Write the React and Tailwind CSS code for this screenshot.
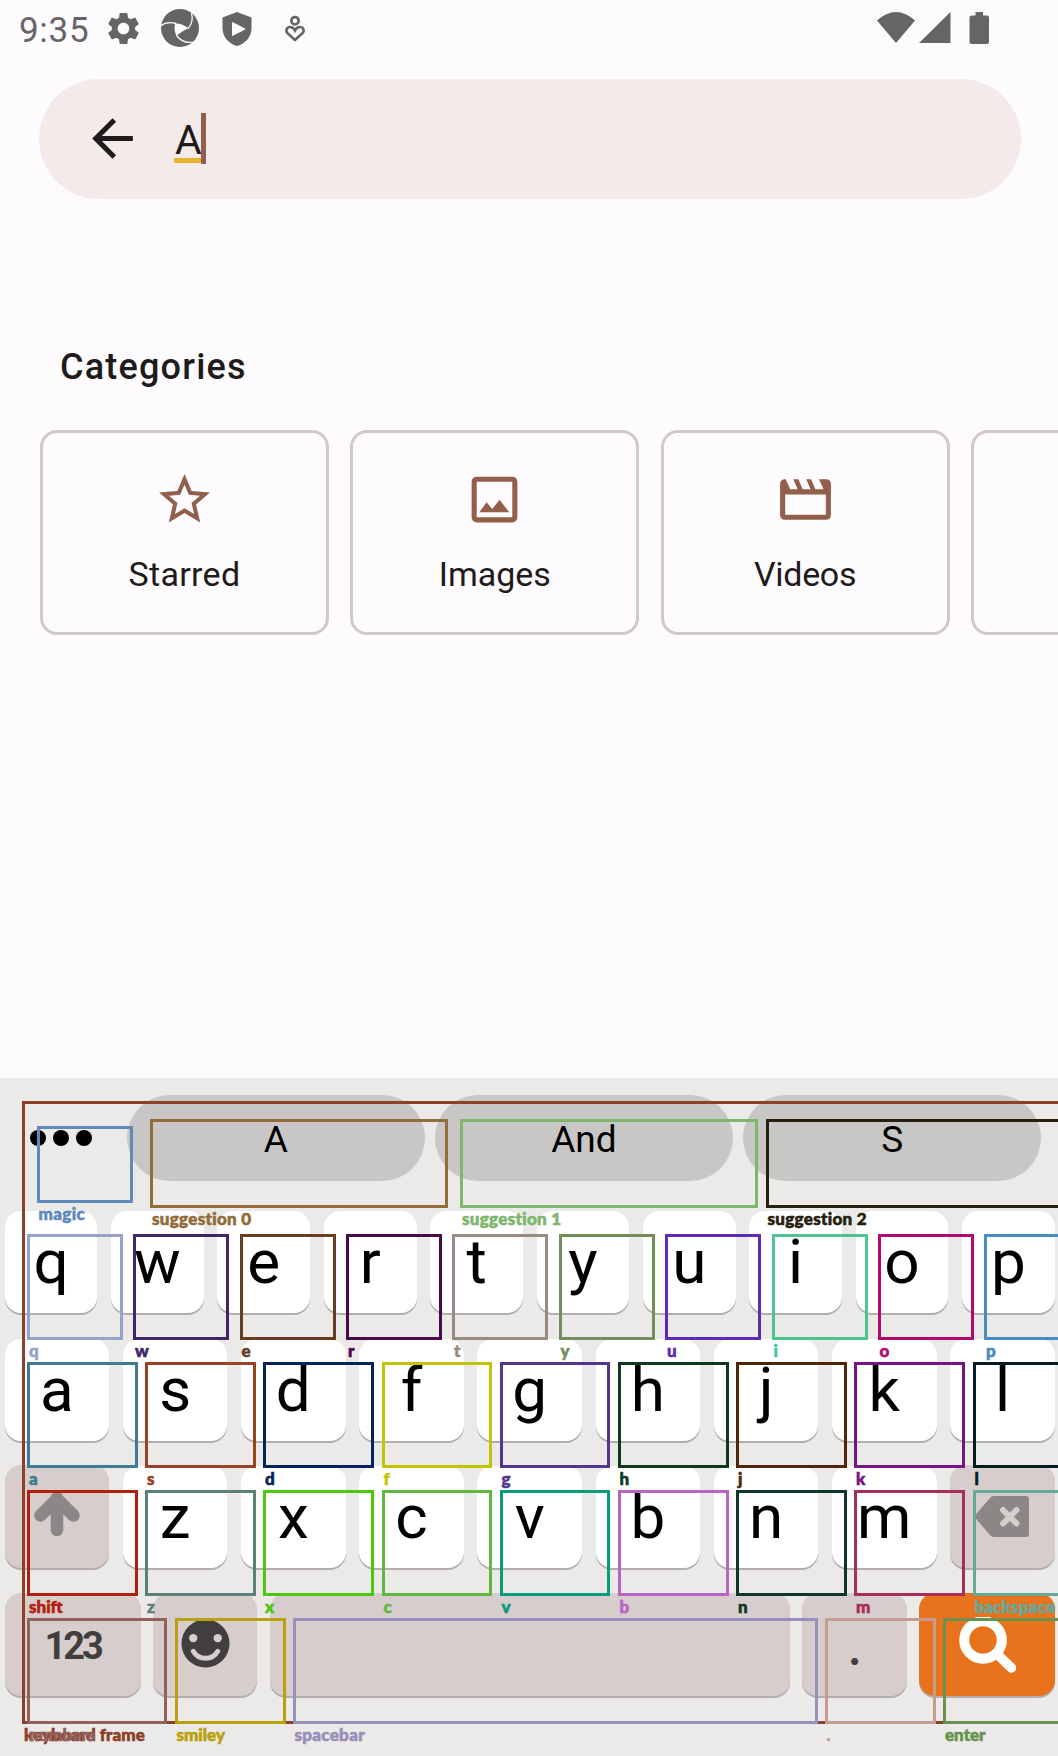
import React from "react";

const row1 = "qwertyuiop".split("");
const row2 = "asdfghjkl".split("");
const row3 = "zxcvbnm".split("");

// Accessibility bounds drawn over the keyboard: [label, left, top, width, height, color, letter spacing]
const frames = [
  ["keyboard frame", 22, 1101, 1100, 623, "#8b4029", 0.1],
  ["magic", 36.5, 1125.5, 96, 77, "#5f8aba", 0.4],
  ["suggestion 0", 150, 1119, 298, 89, "#936c3b", 0.3],
  ["suggestion 1", 460, 1119, 298, 89, "#7fb66e", 0.3],
  ["suggestion 2", 765.5, 1119, 320, 89, "#26200f", 0.3],
  ["q", 27, 1234, 96, 106, "#95a2ca", 0],
  ["w", 133, 1234, 96, 106, "#412568", 0],
  ["e", 239.5, 1234, 96, 106, "#673e1f", 0],
  ["r", 346, 1234, 96, 106, "#4b084b", 0],
  ["t", 452, 1234, 96, 106, "#9b8a84", 0],
  ["y", 558.5, 1234, 96, 106, "#738e5b", 0],
  ["u", 665, 1234, 96, 106, "#5e2bb9", 0],
  ["i", 771.5, 1234, 96, 106, "#4dc490", 0],
  ["o", 877.5, 1234, 96, 106, "#b1096f", 0],
  ["p", 984, 1234, 96, 106, "#478cc2", 0],
  ["a", 27, 1362, 110.5, 106, "#3f7b92", 0],
  ["s", 145, 1362, 111, 106, "#994326", 0],
  ["d", 263, 1362, 111, 106, "#03255d", 0],
  ["f", 381.5, 1362, 110.5, 106, "#c1c506", 0],
  ["g", 499.5, 1362, 110.5, 106, "#55368d", 0],
  ["h", 617.5, 1362, 111, 106, "#0d3a1d", 0],
  ["j", 736, 1362, 111, 106, "#4f260a", 0],
  ["k", 854, 1362, 111, 106, "#771386", 0],
  ["l", 972.5, 1362, 111, 106, "#041c20", 0],
  ["shift", 27, 1490, 110.5, 106, "#b21f0d", 0],
  ["z", 145, 1490, 111, 106, "#5c7f79", 0],
  ["x", 263, 1490, 111, 106, "#48c80f", 0],
  ["c", 381.5, 1490, 110.5, 106, "#60b840", 0],
  ["v", 499.5, 1490, 110.5, 106, "#089b7c", 0],
  ["b", 617.5, 1490, 111, 106, "#b963c8", 0],
  ["n", 736, 1490, 111, 106, "#0e3729", 0],
  ["m", 854, 1490, 111, 106, "#a82e59", 0],
  ["backspace", 972.5, 1490, 111, 106, "#66a89a", 0.2],
  ["numbers", 27, 1618, 140, 106, "#94605c", 0],
  ["smiley", 174.5, 1618, 111, 106, "#baa00c", 0],
  ["spacebar", 292.5, 1618, 525, 106, "#988fba", 0.3],
  [".", 824.5, 1618, 111, 106, "#c49d90", 0],
  ["enter", 943, 1618, 150, 106, "#68924f", 0],
];

function Frame({ data: [label, left, top, width, height, color, spacing] }) {
  return (
    <div className="absolute border-3" style={{ left, top, width, height, borderColor: color }}>
      <span
        className="absolute left-[-1px] top-full mt-[3px] font-['Lato'] text-[17px] leading-[22px] font-black whitespace-nowrap [-webkit-text-stroke:0.6px]"
        style={{ color, letterSpacing: spacing }}
      >
        {label}
      </span>
    </div>
  );
}

function Key({ children, className = "" }) {
  return (
    <div
      className={
        "h-[102px] shrink-0 rounded-[16px] text-center text-[62px] leading-[101px] text-black shadow-[0_2px_0_#b1aead] " +
        className
      }
    >
      {children}
    </div>
  );
}

function Pill({ children }) {
  return (
    <div className="h-[86px] w-[297.500px] shrink-0 rounded-full bg-[#c9c7c6] text-center text-[37px] leading-[89px] text-black">
      {children}
    </div>
  );
}

function Card({ label, className = "", children }) {
  return (
    <div className="flex h-[205px] w-[289px] shrink-0 flex-col items-center rounded-[17px] border-3 border-[#d1c9c8] pt-[36px]">
      {children}
      <span className={"mt-[20px] text-[34px] leading-[48px] text-[#1f1b1a] " + className}>{label}</span>
    </div>
  );
}

export default function App() {
  return (
    <div className="relative flex h-[1756px] w-[1058px] flex-col overflow-hidden bg-[#fefbff] font-['Roboto',sans-serif]">
      {/* Status bar */}
      <div className="flex h-[56px] shrink-0 items-center pl-[19px] pr-[68px] text-[#676468]">
        <span className="mt-[5px] w-[85px] text-[35px] leading-[60px] tracking-[0.7px]">9:35</span>
        <svg className="mt-[1px] size-[39px]" viewBox="0 0 24 24" fill="currentColor">
          <path d="M19.14 12.94c.04-.3.06-.61.06-.94 0-.32-.02-.64-.07-.94l2.03-1.58c.18-.14.23-.41.12-.61l-1.92-3.32c-.12-.22-.37-.29-.59-.22l-2.39.96c-.5-.38-1.03-.7-1.62-.94l-.36-2.54c-.04-.24-.24-.41-.48-.41h-3.84c-.24 0-.43.17-.47.41l-.36 2.54c-.59.24-1.13.57-1.62.94l-2.39-.96c-.22-.08-.47 0-.59.22L2.74 8.87c-.12.21-.08.47.12.61l2.03 1.58c-.05.3-.09.63-.09.94s.02.64.07.94l-2.03 1.58c-.18.14-.23.41-.12.61l1.92 3.32c.12.22.37.29.59.22l2.39-.96c.5.38 1.03.7 1.62.94l.36 2.54c.05.24.24.41.48.41h3.84c.24 0 .44-.17.47-.41l.36-2.54c.59-.24 1.13-.56 1.62-.94l2.39.96c.22.08.47 0 .59-.22l1.92-3.32c.12-.22.07-.47-.12-.61l-2.01-1.58zM12 15.6c-1.98 0-3.6-1.62-3.6-3.6s1.62-3.6 3.6-3.6 3.6 1.62 3.6 3.6-1.62 3.6-3.6 3.6z" />
        </svg>
        <svg className="ml-[17px] h-[40px] w-[40px]" viewBox="0 0 40 40">
          <circle cx="20" cy="20" r="19" fill="currentColor" />
          <path d="M15 15.500 Q22 15 28.500 20.500 Q23 22 16.500 28 Q13.500 22 15 15.500 Z" fill="#fefbff" />
          <g fill="none" stroke="#fefbff" strokeWidth="1.300">
            <path d="M0.500 18 Q7 13 16 15.500" />
            <path d="M31.500 5 Q34 14 28 20.500" />
            <path d="M16.500 27.500 Q24 37 35 33.500" />
          </g>
        </svg>
        <svg className="ml-[22px] mt-[2px] h-[34px] w-[30px]" viewBox="0 0 30 34">
          <path d="M15 0 L29.500 5.500 V16 C29.500 25 23.500 31.500 15 34 C6.500 31.500 .5 25 .5 16 V5.500 Z" fill="currentColor" />
          <path d="M10.500 10.500 L23 17 L10.500 23.500 Z" fill="#fefbff" stroke="#fefbff" strokeWidth="1" strokeLinejoin="round" />
        </svg>
        <svg className="ml-[31.500px] mt-[1px] h-[30px] w-[22px]" viewBox="0 0 22 30" fill="none" stroke="currentColor" strokeWidth="2.600">
          <circle cx="11" cy="6.800" r="3.700" />
          <path d="M11 26 L3.500 19.200 C1 16.500 3 13 6 13 C8.500 13 10 14.500 11 16.500 C12 14.500 13.500 13 16 13 C19 13 21 16.500 18.500 19.200 Z" />
        </svg>
        <svg className="ml-auto h-[32px] w-[113px]" viewBox="0 0 113 32" fill="currentColor">
          <path d="M0 8.500 Q19 -8.500 38 8.500 L19 31 Z" />
          <path d="M73.500 0 V31 H42 Z" />
          <path d="M98.500 0 H106 V3.500 H110 Q112 3.500 112 5.500 V30 Q112 32 110 32 H94.500 Q92.500 32 92.500 30 V5.500 Q92.500 3.500 94.500 3.500 H98.500 Z" />
        </svg>
      </div>

      {/* Search field */}
      <div className="mx-[39px] mr-[37px] mt-[22.500px] flex h-[120px] shrink-0 items-center rounded-full bg-[#f3eae9] pl-[43px]">
        <svg className="size-[61px]" viewBox="0 0 24 24" fill="#1f1b1a">
          <path d="M20 11H7.830l5.590-5.590L12 4l-8 8 8 8 1.410-1.410L7.830 13H20v-2z" />
        </svg>
        <div className="ml-[31px] h-[48px] w-[28px] border-b-[5px] border-[#e4b42e] pl-px text-[41px] leading-[50px] text-[#1f1b1a]">
          A
        </div>
        <div className="ml-[-1px] h-[51px] w-[5px] bg-[#925f4b]" />
      </div>

      <h2 className="ml-[60px] mt-[143.500px] shrink-0 text-[36px] leading-[50px] font-medium tracking-[1.200px] text-[#1f1b1a]">
        Categories
      </h2>
      <div className="ml-[40px] mt-[38px] flex shrink-0 gap-[21.300px]">
        <Card label="Starred" className="tracking-[0.300px]">
          <svg className="size-[61px]" viewBox="0 0 24 24" fill="#925f4b">
            <path d="M22 9.240l-7.190-.620L12 2 9.190 8.630 2 9.240l5.460 4.730L5.820 21 12 17.270 18.180 21l-1.630-7.030L22 9.240zM12 15.400l-3.760 2.270 1-4.280-3.320-2.880 4.380-.380L12 6.100l1.710 4.040 4.380.380-3.320 2.880 1 4.280L12 15.400z" />
          </svg>
        </Card>
        <Card label="Images">
          <svg className="size-[61px]" viewBox="0 0 24 24">
            <rect x="4" y="4" width="16" height="16" rx="1" fill="none" stroke="#925f4b" strokeWidth="2" />
            <path d="M6 17 L8.900 13.100 L11.100 15.700 L14 12.100 L17.800 17 Z" fill="#925f4b" />
          </svg>
        </Card>
        <Card label="Videos" className="tracking-[-0.300px]">
          <svg className="size-[61px]" viewBox="0 0 24 24">
            <path
              fillRule="evenodd"
              fill="#925f4b"
              d="M4 4 L4.200 4 L6 8 H8.900 L7.200 4 H9.200 L10.900 8 H14 L12.300 4 H14.200 L15.900 8 H19.100 L17.300 4 H20 Q22 4 22 6 V18 Q22 20 20 20 H4 Q2 20 2 18 V6 Q2 4 4 4 Z M4 10 V18 H20 V10 Z"
            />
          </svg>
        </Card>
        <Card />
      </div>

      {/* Keyboard */}
      <div className="mt-auto h-[678px] shrink-0 bg-[#ebeae8]">
        <div className="flex h-[133px] pt-[17px]">
          <div className="flex w-[127px] shrink-0 gap-[7.500px] pl-[30px] pt-[35px]">
            <div className="size-[15.500px] rounded-full bg-black" />
            <div className="size-[15.500px] rounded-full bg-black" />
            <div className="size-[15.500px] rounded-full bg-black" />
          </div>
          <div className="flex gap-[10.700px]">
            <Pill>A</Pill>
            <Pill>And</Pill>
            <Pill>S</Pill>
          </div>
        </div>
        <div className="flex h-[127.700px] gap-[13.700px] pl-[4.700px]">
          {row1.map((k) => (
            <Key key={k} className="w-[92.700px] bg-white">{k}</Key>
          ))}
        </div>
        <div className="flex h-[127.700px] gap-[13.700px] pl-[4.700px]">
          {row2.map((k) => (
            <Key key={k} className="w-[104.500px] bg-white">{k}</Key>
          ))}
        </div>
        <div className="flex h-[126.300px] gap-[13.700px] pl-[4.700px]">
          <Key className="-mt-[1px] h-[103px] w-[104.500px] bg-[#d6cdcc]">
            <svg className="mx-auto mt-[25px] h-[48px] w-[48px]" viewBox="0 0 48 48" fill="none" stroke="#8b8786" strokeWidth="12.500" strokeLinecap="round" strokeLinejoin="round">
              <path d="M24 8 V40 M7.500 25.500 L24 9 L40.500 25.500" />
            </svg>
          </Key>
          {row3.map((k) => (
            <Key key={k} className="w-[104.500px] bg-white">{k}</Key>
          ))}
          <Key className="-mt-[1px] h-[103px] w-[105px] bg-[#d6cdcc]">
            <svg className="ml-[23.500px] mt-[31px] h-[41px] w-[56px]" viewBox="0 0 56 41">
              <path d="M0 20.500 L16 2 Q17.500 0 20 0 H52 Q55 0 55 3 V38 Q55 41 52 41 H20 Q17.500 41 16 39 Z" fill="#8b8786" />
              <path d="M29 14 L42.500 27.500 M42.500 14 L29 27.500" stroke="#d6cdcc" strokeWidth="6" strokeLinecap="round" />
            </svg>
          </Key>
        </div>
        <div className="flex gap-[12.400px] pl-[4.600px]">
          <Key className="h-[103px] w-[136px] bg-[#d6cdcc]">
            <span className="block text-[38px] leading-[107px] font-bold tracking-[-3px] text-[#403e3e]">123</span>
          </Key>
          <Key className="h-[103px] w-[104.500px] bg-[#d6cdcc]">
            <svg className="ml-[28.500px] mt-[26px] h-[49px] w-[49px]" viewBox="0 0 50 50">
              <circle cx="25" cy="25" r="24.500" fill="#403e3e" />
              <circle cx="12.500" cy="19.500" r="4.300" fill="#d6cdcc" />
              <circle cx="37.500" cy="19.500" r="4.300" fill="#d6cdcc" />
              <path d="M12.500 33 C18 42.500 32 42.500 37.500 33" fill="none" stroke="#d6cdcc" strokeWidth="5" strokeLinecap="round" />
            </svg>
          </Key>
          <Key className="h-[103px] w-[520px] bg-[#d6cdcc]" />
          <Key className="h-[103px] w-[104.500px] bg-[#d6cdcc]">
            <span className="block font-['Lato'] text-[43px] leading-[112px] font-black text-[#403e3e]">.</span>
          </Key>
          <Key className="h-[103px] w-[136px] bg-[#e8731c]">
            <svg className="ml-[40px] mt-[24px] h-[58px] w-[60px]" viewBox="0 0 60 58" fill="none" stroke="#fff" strokeLinecap="round">
              <circle cx="24" cy="23" r="18.800" strokeWidth="10" />
              <path d="M38 37 L52.500 51" strokeWidth="9.500" />
            </svg>
          </Key>
        </div>
      </div>

      {/* Element bounds overlay */}
      {frames.map((f) => (
        <Frame key={f[0]} data={f} />
      ))}
    </div>
  );
}
